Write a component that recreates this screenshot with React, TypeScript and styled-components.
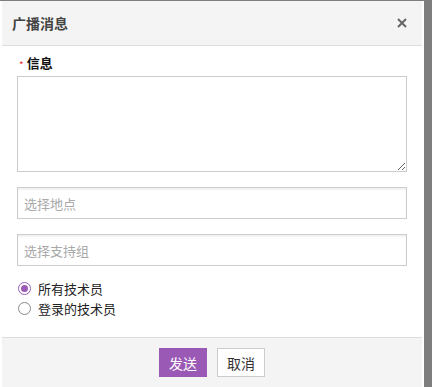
import React from "react";
import styled, { createGlobalStyle } from "styled-components";

const Global = createGlobalStyle`
  html, body {
    margin: 0;
    padding: 0;
    background: #7e7e7e;
    font-family: "Noto Sans CJK SC", "Noto Sans", sans-serif;
  }
  * { box-sizing: border-box; }
`;

const Page = styled.div`
  width: 432px;
  height: 387px;
  padding-top: 1px;
  overflow: hidden;
`;

const Dialog = styled.div`
  width: 424px;
  height: 386px;
  background: #fff;
  border-left: 2px solid #fff;
  border-right: 2px solid #fff;
  display: flex;
  flex-direction: column;
`;

const Header = styled.div`
  height: 45px;
  background: #f4f4f4;
  border-bottom: 1px solid #dddddd;
  display: flex;
  align-items: center;
  justify-content: space-between;
  padding: 0 13px 0 10px;
`;

const Title = styled.div`
  font-size: 14px;
  font-weight: 700;
  color: #444;
`;

const Close = styled.button`
  border: 0;
  background: none;
  padding: 0;
  width: 14px;
  height: 14px;
  display: flex;
  align-items: center;
  justify-content: center;
  color: #666;
  cursor: pointer;
`;

const Body = styled.div`
  flex: 1;
  padding: 8px 15px 0;
  display: flex;
  flex-direction: column;
`;

const Label = styled.div`
  font-size: 13px;
  font-weight: 700;
  color: #111;
  line-height: 18px;
  display: flex;
  align-items: center;
  gap: 3px;
  padding-left: 2px;
`;

const Star = styled.span`
  color: #e33;
  font-size: 10px;
  font-weight: 400;
  line-height: 10px;
  padding-top: 4px;
`;

const Area = styled.textarea`
  margin-top: 4px;
  width: 390px;
  height: 96px;
  border: 1px solid #cccccc;
  resize: vertical;
  outline: none;
  font-family: inherit;
  font-size: 13px;
`;

const Field = styled.input`
  margin-top: 15px;
  width: 390px;
  height: 32px;
  border: 1px solid #cccccc;
  box-shadow: inset 0 2px 2px rgba(0, 0, 0, 0.06);
  padding: 0 6px;
  font-family: inherit;
  font-size: 13px;
  color: #333;
  outline: none;
  &::placeholder {
    color: #a9a9a9;
  }
`;

const Radios = styled.div`
  margin-top: 12px;
  display: flex;
  flex-direction: column;
`;

const RadioRow = styled.label`
  display: flex;
  align-items: center;
  height: 20px;
  font-size: 13px;
  color: #222;
  cursor: pointer;
`;

const Dot = styled.input.attrs({ type: "radio" })`
  appearance: none;
  margin: 0 7px 0 1px;
  width: 13px;
  height: 13px;
  border-radius: 50%;
  border: 1px solid #888;
  background: #fff;
  display: grid;
  place-items: center;
  &:checked {
    border-color: #9b59b6;
  }
  &:checked::after {
    content: "";
    width: 7px;
    height: 7px;
    border-radius: 50%;
    background: #9b59b6;
  }
`;

const Footer = styled.div`
  height: 50px;
  background: #f4f4f4;
  border-top: 1px solid #dddddd;
  display: flex;
  justify-content: center;
  align-items: flex-start;
  padding-top: 10px;
  gap: 10px;
`;

const Btn = styled.button<{ primary?: boolean }>`
  width: 48px;
  height: 29px;
  border: 1px solid ${(p) => (p.primary ? "#9b59b6" : "#cccccc")};
  background: ${(p) => (p.primary ? "#9b59b6" : "#fff")};
  color: ${(p) => (p.primary ? "#fff" : "#333")};
  font-family: inherit;
  font-size: 14px;
  padding: 0;
  cursor: pointer;
`;

export default function App() {
  return (
    <Page>
      <Global />
      <Dialog>
        <Header>
          <Title>广播消息</Title>
          <Close aria-label="close">
            <svg width="10" height="10" viewBox="0 0 10 10">
              <path d="M1 1L9 9M9 1L1 9" stroke="currentColor" strokeWidth="2" />
            </svg>
          </Close>
        </Header>
        <Body>
          <Label>
            <Star>*</Star>信息
          </Label>
          <Area />
          <Field placeholder="选择地点" />
          <Field placeholder="选择支持组" />
          <Radios>
            <RadioRow>
              <Dot name="tech" defaultChecked />
              所有技术员
            </RadioRow>
            <RadioRow>
              <Dot name="tech" />
              登录的技术员
            </RadioRow>
          </Radios>
        </Body>
        <Footer>
          <Btn primary>发送</Btn>
          <Btn>取消</Btn>
        </Footer>
      </Dialog>
    </Page>
  );
}
